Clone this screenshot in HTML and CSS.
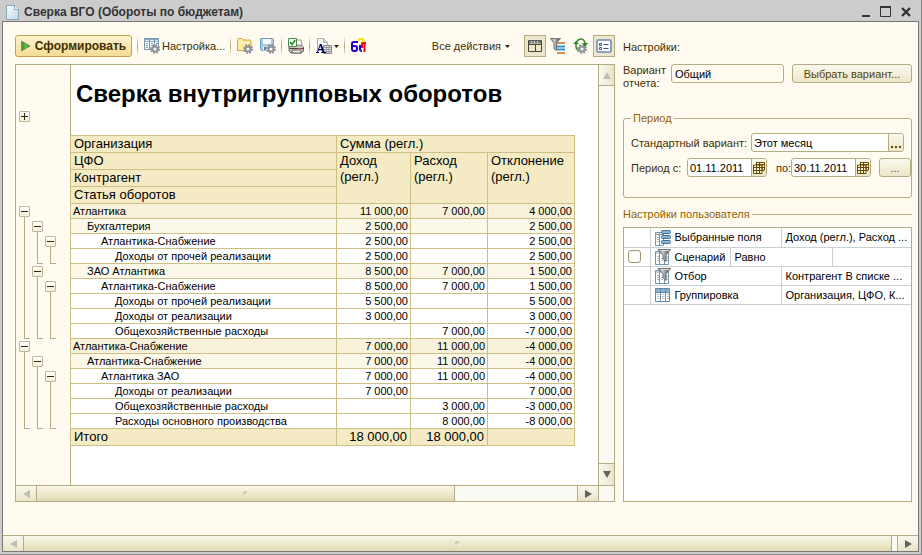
FILE: index.html
```html
<!DOCTYPE html>
<html lang="ru">
<head>
<meta charset="utf-8">
<title>Сверка ВГО (Обороты по бюджетам)</title>
<link rel="stylesheet" href="styles.css">
</head>
<body>
<svg class="defs" width="0" height="0" aria-hidden="true">
  <defs>
    <linearGradient id="paper" x1="0" y1="0" x2="1" y2="1"><stop offset="0" stop-color="#fff"/><stop offset="1" stop-color="#b9d7ea"/></linearGradient>
    <linearGradient id="steel" x1="0" y1="0" x2="1" y2="0"><stop offset="0" stop-color="#888"/><stop offset=".4" stop-color="#ccc"/><stop offset=".55" stop-color="#999"/><stop offset="1" stop-color="#555"/></linearGradient>
    <linearGradient id="play" x1="0" y1="0" x2="1" y2="0"><stop offset="0" stop-color="#3d8a28"/><stop offset=".5" stop-color="#5fc23a"/><stop offset="1" stop-color="#2f7a1c"/></linearGradient>
    <g id="gear">
      <circle cx="5" cy="5" r="4" fill="none" stroke="#8c8f94" stroke-width="2" stroke-dasharray="1.6 1.54"/>
      <circle cx="5" cy="5" r="2.6" fill="#fff" stroke="#8c8f94" stroke-width="2"/>
      <circle cx="5" cy="5" r="1" fill="#f4f4f4"/>
    </g>
    <g id="gridcols">
      <path d="M.5 3.500h13v13h-13z" fill="#fff" stroke="#7895ae"/>
      <path d="M1 4h12v2H1z" fill="#c2d5e6"/>
      <path d="M4.500 4v12M9.500 4v12" stroke="#7895ae"/>
      <path d="M2 8.500h2M2 10.500h2M2 12.500h2M6 10.500h2M6 12.500h2M11 8.500h2M11 10.500h2M11 12.500h2" stroke="#a9bccb"/>
    </g>
    <g id="funnel"><path d="M3 1.500h12.500L11 7v6.500L8 11V7z" fill="url(#steel)" stroke="#6c7174"/><path d="M5 2.500h9" stroke="#ddd"/></g>
    <g id="calendar"><path d="M3 .5h8.500v8M1 3h8v8.500H.5V3z" fill="#fbf5dc" stroke="#6a4a00"/><path d="M3 2.500h8M1 5.500h10M1 8.500h10M3.500 1v10M6.500 1v10M9 3v6" stroke="#6a4a00"/></g>
  </defs>
</svg>
<div class="window">
  <header class="titlebar">
    <svg width="13" height="15" viewBox="0 0 13 15" aria-hidden="true"><path d="M.5.5h8l4 4v10h-12z" fill="url(#paper)" stroke="#8aa7b8"/><path d="M8.500.5v4h4" fill="#fff" stroke="#8aa7b8"/></svg>
    <h1>Сверка ВГО (Обороты по бюджетам)</h1>
    <button class="winbtn" aria-label="Свернуть"><svg width="12" height="12"><path d="M2 10h8" stroke="#333" stroke-width="2"/></svg></button>
    <button class="winbtn" aria-label="Развернуть"><svg width="12" height="12"><path d="M.5 1.500h10v9H.5z" fill="none" stroke="#333"/><path d="M0 1h11" stroke="#333" stroke-width="2"/></svg></button>
    <button class="winbtn" aria-label="Закрыть"><svg width="12" height="12"><path d="M2 2l8 8M10 2l-8 8" stroke="#333" stroke-width="2.400"/></svg></button>
  </header>
  <div class="frame">
    <div class="content">
      <main class="left">
        <div class="toolbar">
          <button class="primary"><svg width="10" height="12" viewBox="0 0 10 12" aria-hidden="true"><path d="M.5 1v10l8.500-5z" fill="url(#play)" stroke="#777" stroke-width=".7"/></svg>Сформировать</button>
          <i class="sep"></i>
          <button class="tool"><svg width="16" height="16" aria-hidden="true"><path d="M.5.5h14v11H.5z" fill="#fff" stroke="#7895ae"/><path d="M1 1h13v3H1z" fill="#8fabc6"/><path d="M1 2.500h13" stroke="#dbe7f1"/><path d="M5.500 1v10M10.500 1v10" stroke="#7895ae"/><path d="M2 5.500h2M2 7.500h2M2 9.500h2M7 5.500h2M7 7.500h2M12 5.500h2" stroke="#7895ae"/><use href="#gear" x="6" y="6"/></svg>Настройка...</button>
          <i class="sep"></i>
          <button class="tool" aria-label="Загрузить настройки"><svg width="16" height="16"><path d="M.5 12.500v-11q0-1 1-1h3q1 0 1.500 1.500h7q1 0 1 1v9.500z" fill="#ffeb9c" stroke="#d3a73c"/><path d="M1 5h12" stroke="#fffbe0"/><use href="#gear" x="6" y="6"/></svg></button>
          <button class="tool" aria-label="Сохранить настройки"><svg width="16" height="16"><path d="M.5.5h12l1 1v11h-12l-1-1z" fill="#a9c9e2" stroke="#6f9cbd"/><path d="M3 1h8v5H3z" fill="#f5fafd"/><path d="M3 8.500h7v4H3z" fill="#e8eef2"/><path d="M4 9h2v3H4z" fill="#597f9c"/><use href="#gear" x="6" y="6"/></svg></button>
          <i class="sep"></i>
          <button class="tool" aria-label="Печать"><svg width="16" height="16"><path d="M1 9l3-2h9l2.500 2v4l-2 2H3l-2-2z" fill="#c9c6c2" stroke="#66615e"/><path d="M8 2h5l1 5H8z" fill="#fff" stroke="#999"/><path d="M1.500 10.500h14" stroke="#444"/><path d="M4 12h9v3H4z" fill="#f5efe7" stroke="#666"/><path d="M10 10.500h3" stroke="#c94b31"/><path d="M.5.500h8v8h-8z" fill="#fff" stroke="#448c44"/><path d="M2 4l2 2.500L7.200 2" fill="none" stroke="#17881c" stroke-width="1.500"/></svg></button>
          <i class="sep"></i>
          <button class="tool" aria-label="Оформление"><svg width="16" height="16"><path d="M1.500.5h6l4 4v8h-10z" fill="#f8f8f8" stroke="#aaa"/><path d="M7.500.5v4h4" fill="#ddd" stroke="#aaa"/><path d="M7.500 7.500h8v8h-8z" fill="#eee" stroke="#888"/><path d="M8 9.500h7M8 11.500h7M8 13.500h7M10.500 8v7M13 8v7" stroke="#999"/><path d="M0 14.500h3M5 14.500h5M1.500 14l3-8M3 11.500h3.500" stroke="#00006e" fill="none"/><path d="M4.500 6l3 8" stroke="#00006e" stroke-width="2"/></svg><svg class="caret" width="5" height="3"><path d="M0 0h5L2.500 3z" fill="#3a2b00"/></svg></button>
          <i class="sep"></i>
          <button class="tool" aria-label="Отладка"><svg width="16" height="16"><path d="M7.500 3q0-2 2.500-2t2.500 2L10 6" fill="none" stroke="#f0e400" stroke-width="2"/><path d="M7 4H3Q1 4 1 6v5q0 2 2 2h1q2 0 2-2v-1q0-2-2-2H1" fill="none" stroke="#2500c8" stroke-width="2"/><path d="M9 7v4q0 2 2 2" fill="none" stroke="#2500c8" stroke-width="2"/><path d="M11 10V6q0-1 1-1h3M13.500 4v10" fill="none" stroke="#eb0d16" stroke-width="2"/></svg></button>
          <button class="tool actions">Все действия<svg class="caret" width="5" height="3" aria-hidden="true"><path d="M0 0h5L2.500 3z" fill="#3a2b00"/></svg></button>
          <div class="toggles">
            <button class="toggle on" aria-label="Таблица"><svg width="16" height="16"><path d="M1.500 2.500h13v11h-13zM8.500 6v7M2 6.500h12" fill="none" stroke="#4b443a"/><path d="M2 4h12" stroke="#777" stroke-width="3"/><path d="M4.500 3v3M7.500 3v3M10.500 3v3" stroke="#ccc"/></svg></button>
            <button class="toggle" aria-label="Отбор"><svg width="16" height="16"><path d="M7 5h8M7 15h8" stroke="#ce9157" stroke-width="2"/><path d="M7 8.500h8M7 11.500h8" stroke="#2a9ad0" stroke-width="2"/><path d="M.5.500h10L6.500 5v7.500L4 11V5z" fill="url(#steel)" stroke="#777"/></svg></button>
            <button class="toggle" aria-label="Обновить"><svg width="16" height="16"><path d="M3 5q2-4 5-4t4 4" fill="none" stroke="#35892b" stroke-width="1.500"/><path d="M0 6h6L3 3zM9 5h6l-3 4z" fill="#26831c"/><path d="M3 6v3q0 2 2 3" fill="none" stroke="#35892b" stroke-width="1.500"/><use href="#gear" x="4" y="6"/></svg></button>
            <button class="toggle on" aria-label="Настройки"><svg width="16" height="16"><rect x="1" y="2" width="14" height="12" rx="1" fill="#fff" stroke="#6b87b9" stroke-width="1.500"/><path d="M3.500 5.500h2v2h-2zM3.500 9.500h2v2h-2z" fill="#fff" stroke="#3f4f85"/><path d="M7.500 6.500h5M7.500 10.500h5" stroke="#3f4f85"/></svg></button>
          </div>
        </div>
        <div class="report">
          <div class="sheet">
            <nav class="gutter" aria-label="Группировки">
              <button class="node closed" aria-label="Развернуть заголовок"></button>
              <div class="tree">
                <div class="branch l1 r1-9"><button class="node" aria-label="Свернуть"></button></div>
                <div class="branch l2 r2-4"><button class="node" aria-label="Свернуть"></button></div>
                <div class="branch l3 r3-4"><button class="node" aria-label="Свернуть"></button></div>
                <div class="branch l2 r5-9"><button class="node" aria-label="Свернуть"></button></div>
                <div class="branch l3 r6-9"><button class="node" aria-label="Свернуть"></button></div>
                <div class="branch l1 r10-15"><button class="node" aria-label="Свернуть"></button></div>
                <div class="branch l2 r11-15"><button class="node" aria-label="Свернуть"></button></div>
                <div class="branch l3 r12-15"><button class="node" aria-label="Свернуть"></button></div>
              </div>
            </nav>
            <section class="page">
              <h2>Сверка внутригрупповых оборотов</h2>
              <table class="data">
                <colgroup><col class="c-name"><col class="c-in"><col class="c-out"><col class="c-diff"></colgroup>
                <thead>
                  <tr><th>Организация</th><th colspan="3">Сумма (регл.)</th></tr>
                  <tr><th>ЦФО</th><th rowspan="3">Доход (регл.)</th><th rowspan="3">Расход (регл.)</th><th rowspan="3">Отклонение (регл.)</th></tr>
                  <tr><th>Контрагент</th></tr>
                  <tr><th>Статья оборотов</th></tr>
                </thead>
                <tbody>
                  <tr class="g1"><td>Атлантика</td><td>11 000,00</td><td>7 000,00</td><td>4 000,00</td></tr>
                  <tr class="g2"><td>Бухгалтерия</td><td>2 500,00</td><td></td><td>2 500,00</td></tr>
                  <tr class="g3"><td>Атлантика-Снабжение</td><td>2 500,00</td><td></td><td>2 500,00</td></tr>
                  <tr class="g4"><td>Доходы от прочей реализации</td><td>2 500,00</td><td></td><td>2 500,00</td></tr>
                  <tr class="g2"><td>ЗАО Атлантика</td><td>8 500,00</td><td>7 000,00</td><td>1 500,00</td></tr>
                  <tr class="g3"><td>Атлантика-Снабжение</td><td>8 500,00</td><td>7 000,00</td><td>1 500,00</td></tr>
                  <tr class="g4"><td>Доходы от прочей реализации</td><td>5 500,00</td><td></td><td>5 500,00</td></tr>
                  <tr class="g4"><td>Доходы от реализации</td><td>3 000,00</td><td></td><td>3 000,00</td></tr>
                  <tr class="g4"><td>Общехозяйственные расходы</td><td></td><td>7 000,00</td><td>-7 000,00</td></tr>
                  <tr class="g1"><td>Атлантика-Снабжение</td><td>7 000,00</td><td>11 000,00</td><td>-4 000,00</td></tr>
                  <tr class="g2"><td>Атлантика-Снабжение</td><td>7 000,00</td><td>11 000,00</td><td>-4 000,00</td></tr>
                  <tr class="g3"><td>Атлантика ЗАО</td><td>7 000,00</td><td>11 000,00</td><td>-4 000,00</td></tr>
                  <tr class="g4"><td>Доходы от реализации</td><td>7 000,00</td><td></td><td>7 000,00</td></tr>
                  <tr class="g4"><td>Общехозяйственные расходы</td><td></td><td>3 000,00</td><td>-3 000,00</td></tr>
                  <tr class="g4"><td>Расходы основного производства</td><td></td><td>8 000,00</td><td>-8 000,00</td></tr>
                </tbody>
                <tfoot><tr><td>Итого</td><td>18 000,00</td><td>18 000,00</td><td></td></tr></tfoot>
              </table>
            </section>
          </div>
          <div class="vscroll">
            <button aria-label="Вверх"><svg width="8" height="7"><path d="M4 0l4 7H0z" fill="#c3bfae"/></svg></button>
            <div class="track"></div>
            <button aria-label="Вниз"><svg width="8" height="7"><path d="M0 0h8L4 7z" fill="#66635c"/></svg></button>
          </div>
          <div class="hscroll">
            <button aria-label="Влево"><svg width="7" height="8"><path d="M7 0v8L0 4z" fill="#c3bfae"/></svg></button>
            <div class="thumb"><i></i></div>
            <div class="rest"></div>
            <button aria-label="Вправо"><svg width="7" height="8"><path d="M0 0v8l7-4z" fill="#66635c"/></svg></button>
          </div>
          <div class="corner"></div>
        </div>
      </main>
      <aside class="right">
        <h3>Настройки:</h3>
        <div class="variant">
          <label for="variant">Вариант отчета:</label>
          <input id="variant" class="field" type="text" value="Общий">
          <button class="btn">Выбрать вариант...</button>
        </div>
        <fieldset class="period">
          <legend>Период</legend>
          <div class="line">
            <label for="std">Стандартный вариант:</label>
            <div class="combo grow"><input id="std" type="text" value="Этот месяц"><button class="dots" aria-label="Выбрать период"><svg width="11" height="2"><path d="M0 0h2v2H0zM4 0h2v2H4zM8 0h2v2H8z" fill="#6a4a00"/></svg></button></div>
          </div>
          <div class="line dates">
            <label for="from">Период с:</label>
            <div class="combo"><input id="from" type="text" value="01.11.2011"><button aria-label="Календарь начала"><svg width="12" height="12"><use href="#calendar"/></svg></button></div>
            <label for="to" class="to">по:</label>
            <div class="combo"><input id="to" type="text" value="30.11.2011"><button aria-label="Календарь конца"><svg width="12" height="12"><use href="#calendar"/></svg></button></div>
            <button class="btn more">...</button>
          </div>
        </fieldset>
        <h3 class="group">Настройки пользователя</h3>
        <div class="listbox">
          <table class="settings">
            <colgroup><col class="s-check"><col class="s-name"><col class="s-a"><col class="s-b"><col></colgroup>
            <tr><td></td><td colspan="2"><span class="item"><svg width="17" height="17" aria-hidden="true"><path d="M.5 3.500h8v13h-8z" fill="#fff" stroke="#7895ae"/><path d="M1 5.500h7M4.500 4v12" stroke="#7895ae"/><path d="M2 8.500h2M2 10.500h2M2 12.500h2" stroke="#a9bccb"/><rect x="6.500" y="1.500" width="9" height="3" rx="1" fill="#8db3d2" stroke="#41709a"/><rect x="6.500" y="6.500" width="9" height="3" rx="1" fill="#8db3d2" stroke="#41709a"/><rect x="6.500" y="11.500" width="9" height="3" rx="1" fill="#8db3d2" stroke="#41709a"/></svg>Выбранные поля</span></td><td colspan="2">Доход (регл.), Расход ...</td></tr>
            <tr><td><input type="checkbox" aria-label="Сценарий"></td><td><span class="item"><svg width="17" height="17" aria-hidden="true"><use href="#gridcols"/><use href="#funnel"/></svg>Сценарий</span></td><td colspan="2">Равно</td><td></td></tr>
            <tr><td></td><td colspan="2"><span class="item"><svg width="17" height="17" aria-hidden="true"><use href="#gridcols"/><use href="#funnel"/></svg>Отбор</span></td><td colspan="2">Контрагент В списке ...</td></tr>
            <tr><td></td><td colspan="2"><span class="item"><svg width="17" height="17" aria-hidden="true"><path d="M.5 2.500h14v13H.5z" fill="#fff" stroke="#6189aa"/><path d="M1 3h13v3H1z" fill="#8db3d2"/><path d="M1 6.500h13M5.500 3v12M10.500 3v12" stroke="#6189aa"/><path d="M2 8.500h2M2 10.500h2M2 12.500h2M7 8.500h2M7 10.500h2M7 12.500h2M12 8.500h2M12 10.500h2M12 12.500h2" stroke="#a9bccb"/></svg>Группировка</span></td><td colspan="2">Организация, ЦФО, К...</td></tr>
          </table>
        </div>
      </aside>
    </div>
    <div class="hscroll outer">
      <button aria-label="Влево"><svg width="7" height="8"><path d="M7 0v8L0 4z" fill="#c3bfae"/></svg></button>
      <div class="thumb"><i></i></div>
      <div class="rest"></div>
      <button aria-label="Вправо"><svg width="7" height="8"><path d="M0 0v8l7-4z" fill="#66635c"/></svg></button>
    </div>
  </div>
</div>
</body>
</html>
```
FILE: styles.css
```css
:root {
  --line: #b4ad84;
  --cream: #fffbf0;
  --ink: #3f2f00;
  --cell: #ccc085;
}
* { box-sizing: border-box; }
body { margin: 0; font: 11px/14px "Liberation Sans", Arial, sans-serif; color: var(--ink); }
button, input { font: inherit; color: inherit; margin: 0; padding: 0; border: 0; background: none; }
svg { display: block; flex: none; }
h1, h2, h3 { margin: 0; font-weight: normal; }
.defs { position: absolute; }

.window {
  display: flex; flex-direction: column; min-height: 100vh;
  padding: 0 2px 2px; background: #ccc;
  border-right: 1px solid #858585; border-bottom: 1px solid #858585;
}
.titlebar { display: flex; align-items: center; height: 21px; padding: 3px 3px 0 4px; }
.titlebar h1 { flex: 1; margin-left: 5px; font-size: 12px; font-weight: bold; color: #333; }
.winbtn { width: 20px; display: flex; justify-content: center; }

.frame { flex: 1; display: flex; flex-direction: column; border: 1px solid #777; background: var(--cream); }
.content { flex: 1; display: flex; gap: 8px; padding: 13px 6px 33px 12px; }
.left { flex: 1; min-width: 0; display: flex; flex-direction: column; gap: 7px; }

.toolbar { display: flex; align-items: center; gap: 4px; height: 22px; }
.primary {
  display: flex; align-items: center; justify-content: center; gap: 4px; width: 117px; height: 22px;
  border: 1px solid #c9a04c; border-radius: 3px; font-size: 12px; font-weight: bold;
  background: linear-gradient(#fdf3cf, #f6dc95);
}
.tool { display: flex; align-items: center; gap: 2px; }
.tool + .tool { margin-left: 3px; }
.sep { width: 1px; height: 20px; margin: 0 2px 0 1px; background: linear-gradient(#fffbf0, #a8a078, #fffbf0); }
.toolbar .actions { margin-left: auto; gap: 4px; }
.toggles { display: flex; gap: 1px; margin-left: 10px; }
.toggle { width: 22px; height: 22px; display: grid; place-items: center; }
.toggle.on { border: 1px solid var(--line); background: #ece6cd; }

.report {
  flex: 1; display: grid; grid-template: 1fr 16px / 1fr 16px;
  border: 1px solid var(--line); background: #fff;
}
.sheet { display: flex; min-width: 0; }
.gutter { width: 55px; padding: 46px 0 0 3px; background: var(--cream); border-right: 1px solid var(--line); }
.tree { display: grid; grid-template-columns: repeat(3, 13px); grid-template-rows: repeat(15, 15px); margin-top: 82px; }
.node {
  position: relative; display: block; width: 11px; height: 11px;
  border: 1px solid #bdb89c; border-radius: 1px; background: linear-gradient(#fff, #f3efdc);
}
.node::before, .closed::after { content: ""; position: absolute; left: 1px; top: 4px; width: 7px; height: 1px; background: #3a2500; }
.closed::after { left: 4px; top: 1px; width: 1px; height: 7px; }
.branch { display: flex; flex-direction: column; padding-top: 2px; }
.branch::after { content: ""; flex: 1; width: 5px; margin-left: 5px; border: solid var(--line); border-width: 0 0 1px 1px; }
.l1 { grid-column: 1; }
.l2 { grid-column: 2; }
.l3 { grid-column: 3; }
.r1-9 { grid-row: 1 / 10; }
.r2-4 { grid-row: 2 / 5; }
.r3-4 { grid-row: 3 / 5; }
.r5-9 { grid-row: 5 / 10; }
.r6-9 { grid-row: 6 / 10; }
.r10-15 { grid-row: 10 / 16; }
.r11-15 { grid-row: 11 / 16; }
.r12-15 { grid-row: 12 / 16; }

.page { flex: 1; min-width: 0; color: #000; }
.page h2 { padding: 15px 0 27px 5px; font-size: 24px; line-height: 28px; font-weight: bold; white-space: nowrap; }
.data { width: 505px; margin-left: -1px; table-layout: fixed; border-collapse: collapse; }
.c-name { width: 266px; }
.c-in { width: 74px; }
.c-out { width: 77px; }
.c-diff { width: 87px; }
.data th, .data td { padding: 0 2px; border: 1px solid var(--cell); white-space: nowrap; }
.data th { height: 17px; padding: 0 3px; font-size: 13px; line-height: 16px; font-weight: normal; text-align: left; vertical-align: top; background: #f4ebc4; white-space: normal; }
.data td { height: 15px; font-size: 11px; line-height: 14px; text-align: right; }
.data td:first-child { text-align: left; }
.data tfoot td { height: 17px; padding: 0 3px; font-size: 13px; line-height: 16px; background: #f4ebc4; }
.g1 { background: #f8f2da; }
.g2 { background: #fbf8ea; }
.data .g2 td:first-child { padding-left: 16px; }
.data .g3 td:first-child { padding-left: 30px; }
.data .g4 td:first-child { padding-left: 44px; }

.vscroll { display: flex; flex-direction: column; border-left: 1px solid var(--line); background: #faf9f4; }
.vscroll button { height: 21px; display: grid; place-items: center; background: linear-gradient(90deg, #faf8ee, #e9e4c8); border-bottom: 1px solid var(--line); }
.vscroll .track { flex: 1; border-bottom: 1px solid var(--line); }
.vscroll button:last-child { border-bottom: 0; }
.hscroll { display: flex; height: 16px; border-top: 1px solid var(--line); background: #faf9f4; }
.hscroll button { width: 21px; display: grid; place-items: center; background: linear-gradient(#faf8ee, #e9e4c8); border-right: 1px solid var(--line); }
.hscroll button:last-child { border: 0; border-left: 1px solid var(--line); }
.thumb { flex: 418; display: grid; place-items: center; background: linear-gradient(#f9f7e9, #ece7c8 60%, #e0d9b0); border-right: 1px solid var(--line); }
.thumb i { width: 5px; height: 5px; border-radius: 50%; background: linear-gradient(135deg, #b9b392, #fff); }
.rest { flex: 122; }
.corner { border: solid var(--line); border-width: 1px 0 0 1px; background: #faf9f4; }
.outer .thumb { flex: 1; }
.outer .rest { flex: 0 0 5px; }

.right { width: 289px; flex: none; display: flex; flex-direction: column; }
.right h3 { font-size: 11px; line-height: 14px; margin-top: 5px; }
.variant { display: flex; align-items: flex-start; margin-top: 10px; }
.variant label { width: 48px; line-height: 13px; }
.field { flex: 1; min-width: 0; height: 19px; padding: 0 3px; border: 1px solid var(--line); border-radius: 3px; color: #000; }
.btn { height: 19px; border: 1px solid var(--line); border-radius: 3px; background: linear-gradient(#faf9ee, #ebe6ca); color: #5b4300; }
.variant .btn { width: 120px; margin-left: 8px; }
.period { margin: 21px 0 0; padding: 8px 7px 20px; border: 1px solid var(--line); border-radius: 3px; min-width: 0; }
.period legend { margin-left: 0; padding: 0 2px; color: #955f00; line-height: 14px; }
.line { display: flex; align-items: center; }
.line label { white-space: nowrap; }
.dates { margin: 6px -7px 0 0; }
.combo { display: flex; height: 19px; width: 80px; border: 1px solid var(--line); border-radius: 3px; background: #fff; color: #000; overflow: hidden; }
.combo input { flex: 1; min-width: 0; padding: 0 2px; }
.combo button { width: 15px; display: grid; place-items: center; border-left: 1px solid var(--line); background: linear-gradient(#faf9ee, #ebe6ca); }
.combo .dots { align-items: end; padding-bottom: 3px; }
.line label[for="std"] { width: 120px; }
.line .grow { flex: 1; }
.line label[for="from"] { width: 56px; }
.line .to { margin-left: 9px; width: 15px; }
.more { width: 32px; margin-left: auto; }
.right .group { display: flex; align-items: center; gap: 2px; margin-top: 9px; color: #955f00; }
.group::after { content: ""; flex: 1; border-top: 1px solid var(--line); }
.listbox { flex: 1; margin-top: 6px; border: 1px solid var(--line); background: #fff; color: #000; }
.settings { width: 100%; table-layout: fixed; border-collapse: collapse; }
.s-check { width: 26px; }
.s-name { width: 80px; }
.s-a, .s-b { width: 51px; }
.settings td { height: 19px; padding: 0 4px; line-height: 18px; border: 1px solid #c9d0d6; white-space: nowrap; overflow: hidden; }
.settings tr:first-child td { border-top: 0; }
.settings td:first-child { border-left: 0; }
.settings td:last-child { border-right: 0; padding-right: 0; }
.item { display: flex; align-items: center; gap: 3px; height: 18px; }
.settings input { appearance: none; display: block; width: 13px; height: 13px; border: 1px solid #a09468; border-radius: 3px; background: #fff; }
```
